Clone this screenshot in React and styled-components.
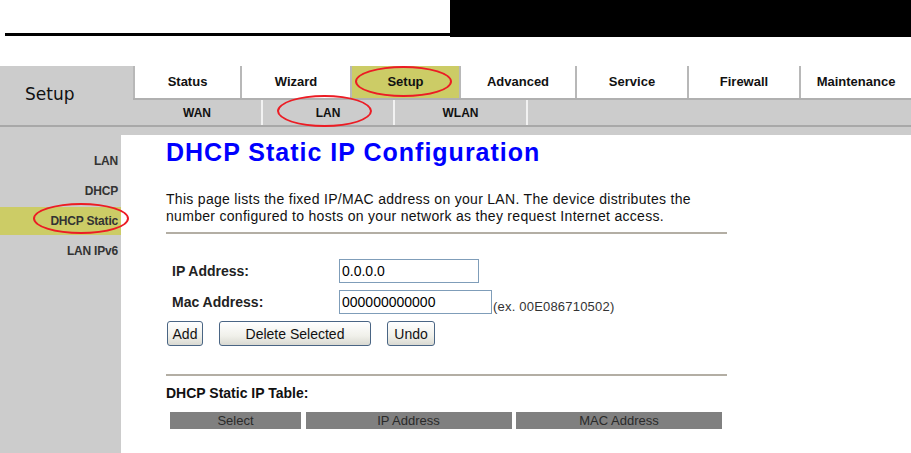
import React from 'react';
import styled, { createGlobalStyle } from 'styled-components';

const GlobalStyle = createGlobalStyle`
  html, body {
    margin: 0;
    padding: 0;
    background: #ffffff;
  }
  body {
    font-family: "Liberation Sans", Arial, sans-serif;
  }
`;

const Page = styled.div`
  width: 911px;
  height: 453px;
  overflow: hidden;
  display: flex;
  flex-direction: column;
`;

const Header = styled.header`
  display: flex;
  height: 37px;
  margin-bottom: 29px;
`;

const HeaderRule = styled.div`
  flex: 0 0 445px;
  margin-left: 5px;
  height: 33px;
  border-bottom: 3px solid #000000;
`;

const HeaderBlock = styled.div`
  flex: 1;
  background: #000000;
`;

const Nav = styled.nav`
  display: flex;
  height: 59px;
`;

const SectionLabel = styled.div`
  flex: 0 0 133px;
  background: #cccccc;
  display: flex;
  align-items: center;
  padding: 0 0 4px 25px;
  box-sizing: border-box;
  font-family: "DejaVu Sans", Arial, sans-serif;
  font-size: 17px;
  color: #111111;
`;

const Menus = styled.div`
  flex: 1;
  display: flex;
  flex-direction: column;
`;

const TabRow = styled.div`
  display: flex;
  height: 32px;
  border-bottom: 2px solid #b0b0b0;
`;

const Tab = styled.div`
  position: relative;
  flex: ${p => (p.$w ? `0 0 ${p.$w}px` : '1')};
  box-sizing: border-box;
  border-left: 2px solid #b8b8b8;
  background: ${p => (p.$active ? '#cccc66' : '#ffffff')};
  display: flex;
  align-items: center;
  justify-content: center;
  padding-bottom: 1px;
  font-size: 13px;
  font-weight: bold;
  color: #111111;
`;

const SubRow = styled.div`
  display: flex;
  height: 25px;
  background: #cccccc;
`;

const SubItem = styled.div`
  position: relative;
  flex: 0 0 ${p => p.$w}px;
  box-sizing: border-box;
  border-right: 2px solid #f2f2f2;
  display: flex;
  align-items: center;
  justify-content: center;
  font-size: 12px;
  font-weight: bold;
  color: #111111;
`;

const Rule = styled.div`
  height: 2px;
  background: #a8a8a8;
`;

const Body = styled.div`
  flex: 1;
  display: flex;
  background: #cccccc;
  padding-top: 8px;
`;

const Sidebar = styled.aside`
  flex: 0 0 121px;
  display: flex;
  flex-direction: column;
  gap: 2px;
  padding-top: 12px;
`;

const SideItem = styled.div`
  position: relative;
  height: 28px;
  display: flex;
  align-items: center;
  justify-content: flex-end;
  padding-right: 3px;
  background: ${p => (p.$active ? '#cccc66' : 'transparent')};
  font-size: 12px;
  font-weight: bold;
  letter-spacing: -0.2px;
  color: #333333;
`;

const Circle = styled.span`
  position: absolute;
  left: ${p => p.$x}px;
  top: ${p => p.$y}px;
  width: ${p => p.$w}px;
  height: ${p => p.$h}px;
  box-sizing: border-box;
  border: 2px solid #ec1c24;
  border-radius: 50%;
  pointer-events: none;
  z-index: 2;
`;

const Content = styled.main`
  flex: 1;
  background: #ffffff;
  padding: 2px 0 0 45px;
`;

const Title = styled.h1`
  margin: 0;
  font-size: 25px;
  line-height: 30px;
  letter-spacing: 1px;
  font-weight: bold;
  color: #0000ff;
`;

const Intro = styled.p`
  margin: 24px 0 0;
  width: 535px;
  font-size: 14px;
  line-height: 17px;
  letter-spacing: 0.3px;
  color: #111111;
`;

const Divider = styled.hr`
  width: 561px;
  margin: ${p => p.$top}px 0 0;
  border: 0;
  height: 2px;
  background: #b3aea4;
`;

const Form = styled.div`
  margin-top: 25px;
  display: flex;
  flex-direction: column;
  gap: 7px;
`;

const FieldRow = styled.div`
  display: flex;
  align-items: center;
`;

const Label = styled.label`
  flex: 0 0 173px;
  padding-left: 6px;
  box-sizing: border-box;
  font-size: 14px;
  font-weight: bold;
  color: #222222;
`;

const Input = styled.input`
  width: ${p => p.$w}px;
  height: 24px;
  box-sizing: border-box;
  border: 1px solid #7f9db9;
  padding: 0 2px;
  font-family: "Liberation Sans", Arial, sans-serif;
  font-size: 14px;
  color: #000000;
  background: #ffffff;
  outline: none;
`;

const Hint = styled.span`
  align-self: flex-end;
  margin-left: 1px;
  font-size: 13px;
  letter-spacing: 0.2px;
  color: #333333;
`;

const Buttons = styled.div`
  display: flex;
  gap: 16px;
  margin-left: 1px;
`;

const Button = styled.button`
  width: ${p => p.$w}px;
  height: 25px;
  padding: 0;
  border: 1px solid #4a6584;
  border-radius: 3px;
  background: linear-gradient(#ffffff, #f0f0ea 60%, #d9d9d2);
  font-family: "Liberation Sans", Arial, sans-serif;
  font-size: 14px;
  color: #111111;
`;

const TableTitle = styled.h2`
  margin: 9px 0 0;
  font-size: 14px;
  line-height: 17px;
  font-weight: bold;
  color: #111111;
`;

const TableHead = styled.div`
  display: grid;
  grid-template-columns: 131px 206px 206px;
  column-gap: 4.5px;
  margin: 10px 0 0 4px;
  width: 552px;
`;

const HeadCell = styled.div`
  height: 17px;
  background: #808080;
  display: flex;
  align-items: center;
  justify-content: center;
  font-size: 13px;
  color: #2a2a2a;
`;

const tabs = [
  { label: 'Status', w: 107 },
  { label: 'Wizard', w: 110 },
  { label: 'Setup', w: 109, active: true },
  { label: 'Advanced', w: 116 },
  { label: 'Service', w: 112 },
  { label: 'Firewall', w: 112 },
  { label: 'Maintenance' }
];

const subTabs = [
  { label: 'WAN', w: 130 },
  { label: 'LAN', w: 132, circle: true },
  { label: 'WLAN', w: 133 }
];

const sideItems = ['LAN', 'DHCP', 'DHCP Static', 'LAN IPv6'];

export default function App() {
  return (
    <Page>
      <GlobalStyle />
      <Header>
        <HeaderRule />
        <HeaderBlock />
      </Header>

      <Nav>
        <SectionLabel>Setup</SectionLabel>
        <Menus>
          <TabRow>
            {tabs.map(t => (
              <Tab key={t.label} $w={t.w} $active={t.active}>
                {t.label}
                {t.active && <Circle $x={3} $y={0} $w={97} $h={31} />}
              </Tab>
            ))}
          </TabRow>
          <SubRow>
            {subTabs.map(s => (
              <SubItem key={s.label} $w={s.w}>
                {s.label}
                {s.circle && <Circle $x={14} $y={-5} $w={95} $h={32} />}
              </SubItem>
            ))}
          </SubRow>
        </Menus>
      </Nav>
      <Rule />

      <Body>
        <Sidebar>
          {sideItems.map(item => (
            <SideItem key={item} $active={item === 'DHCP Static'}>
              {item}
              {item === 'DHCP Static' && <Circle $x={33} $y={-4} $w={96} $h={31} />}
            </SideItem>
          ))}
        </Sidebar>

        <Content>
          <Title>DHCP Static IP Configuration</Title>
          <Intro>
            This page lists the fixed IP/MAC address on your LAN. The device distributes the
            number configured to hosts on your network as they request Internet access.
          </Intro>
          <Divider $top={7} />

          <Form>
            <FieldRow>
              <Label>IP Address:</Label>
              <Input $w={140} defaultValue="0.0.0.0" />
            </FieldRow>
            <FieldRow>
              <Label>Mac Address:</Label>
              <Input $w={153} defaultValue="000000000000" />
              <Hint>(ex. 00E086710502)</Hint>
            </FieldRow>
            <Buttons>
              <Button $w={36}>Add</Button>
              <Button $w={152}>Delete Selected</Button>
              <Button $w={48}>Undo</Button>
            </Buttons>
          </Form>

          <Divider $top={28} />
          <TableTitle>DHCP Static IP Table:</TableTitle>
          <TableHead>
            <HeadCell>Select</HeadCell>
            <HeadCell>IP Address</HeadCell>
            <HeadCell>MAC Address</HeadCell>
          </TableHead>
        </Content>
      </Body>
    </Page>
  );
}
